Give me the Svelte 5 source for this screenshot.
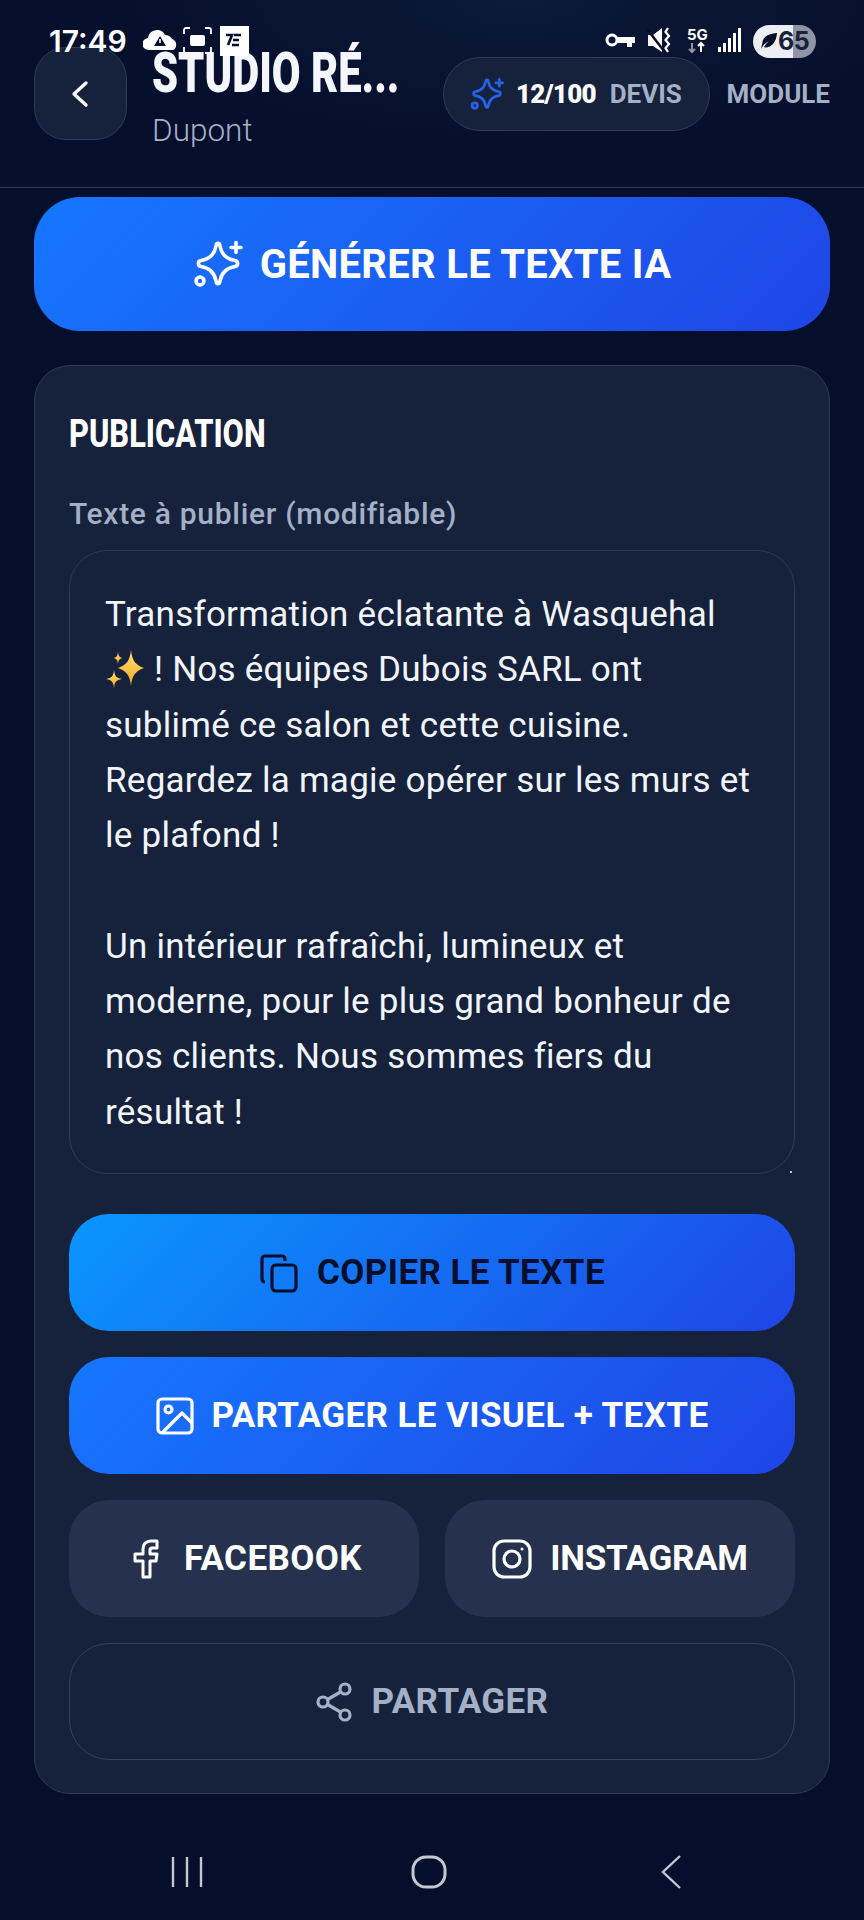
<script>
  const lines = [
    ['Transformation éclatante à Wasquehal'],
    ['✨', ' ! Nos équipes Dubois SARL ont'],
    ['sublimé ce salon et cette cuisine.'],
    ['Regardez la magie opérer sur les murs et'],
    ['le plafond !'],
    [''],
    ['Un intérieur rafraîchi, lumineux et'],
    ['moderne, pour le plus grand bonheur de'],
    ['nos clients. Nous sommes fiers du'],
    ['résultat !']
  ];
</script>

{#snippet sparkles(size, width)}
  <svg width={size} height={size} viewBox="0 0 50 50" fill="none" stroke="currentColor" stroke-width={width} stroke-linecap="round">
    <path d="M23 7C23.500 3.500 26.500 3.500 27 7C28.500 15.500 33 20 42 21.500C45.500 22 45.500 27 42 27.500C33 29 28.500 33.500 27 42C26.500 45.500 23.500 45.500 23 42C21.500 33.500 17 29 8 27.500C4.500 27 4.500 22 8 21.500C17 20 21.500 15.500 23 7Z"/>
    <path d="M43 3.500v10M38 8.500h10"/>
    <circle cx="7" cy="42" r="4"/>
  </svg>
{/snippet}

<div class="phone">
  <div class="status">
    <span class="time">17:49</span>
    <svg width="112" height="30" viewBox="0 0 112 30">
      <path d="M6 24a6 6 0 0 1-1-12 9 9 0 0 1 17-3 8 8 0 0 1 7 4 6 6 0 0 1 1 11z" fill="#fff"/>
      <path d="M17 10l6 10H11z" fill="#050e2b"/>
      <rect x="16.200" y="13" width="1.600" height="4" fill="#fff"/>
      <path d="M41 8V4a2 2 0 0 1 2-2h4M62 2h4a2 2 0 0 1 2 2v4M68 21v4a2 2 0 0 1-2 2h-4M47 27h-4a2 2 0 0 1-2-2v-4" fill="none" stroke="#fff" stroke-width="1.800"/>
      <rect x="47" y="9" width="15" height="11" rx="2" fill="#fff"/>
      <rect x="77" y="0" width="29" height="30" fill="#fff"/>
      <path d="M83 9h6l-4 10M91 9h7M90 14h6M89 19h7" fill="none" stroke="#050e2b" stroke-width="2.600"/>
    </svg>
    <span class="spacer"></span>
    <svg class="st-right" width="136" height="30" viewBox="0 0 136 30">
      <circle cx="7" cy="14" r="5" fill="none" stroke="#fff" stroke-width="3"/>
      <path d="M12 11h18v6h-3v4h-5v-4H12z" fill="#fff"/>
      <path d="M43 9h5l9-7v24l-9-6h-5z" fill="#fff"/>
      <path d="M42 3l17 22" stroke="#050e2b" stroke-width="2.500"/>
      <path d="M63 2l-2.500 4 3.500 4-3.500 4 3.500 4-3.500 4 2.500 4" fill="none" stroke="#fff" stroke-width="2.200"/>
      <text x="82" y="14" class="fiveg">5G</text>
      <path d="M87 17v9M84 23l3 3 3-3" fill="none" stroke="#8e95a6" stroke-width="2"/>
      <path d="M96 26v-9M93 20l3-3 3 3" fill="none" stroke="#fff" stroke-width="2"/>
      <rect x="113" y="21" width="3" height="5" fill="#fff"/>
      <rect x="118" y="17" width="3" height="9" fill="#fff"/>
      <rect x="123" y="12" width="3" height="14" fill="#fff"/>
      <rect x="128" y="7" width="3" height="19" fill="#fff"/>
      <rect x="133" y="2" width="3" height="24" fill="#fff"/>
    </svg>
    <div class="battery">
      <svg width="18" height="20" viewBox="0 0 20 20"><path d="M1 19C3 15 6 12 10 10 7 13 5 15 4.500 17 12 18 18 12 19 1 12 2 3 3 2.500 13z" fill="#050e2b"/></svg>
      <span>65</span>
    </div>
  </div>

  <header class="top">
    <button class="back" aria-label="Retour">
      <svg width="36" height="36" viewBox="0 0 36 36"><path d="M23 7L11 18l12 11" fill="none" stroke="#fff" stroke-width="3.400" stroke-linecap="round" stroke-linejoin="round"/></svg>
    </button>
    <div class="heading">
      <div class="title">STUDIO RÉ...</div>
      <div class="sub">Dupont</div>
    </div>
    <div class="pill">
      <span class="pill-icon">{@render sparkles(34, 4)}</span>
      <b>12/100</b>
      <span>DEVIS</span>
    </div>
    <span class="module">MODULE</span>
  </header>

  <main class="content">
    <button class="btn big grad">
      {@render sparkles(50, 3.6)}
      GÉNÉRER LE TEXTE IA
    </button>

    <section class="card">
      <h2>PUBLICATION</h2>
      <div class="label">Texte à publier (modifiable)</div>
      <div class="area">
        {#each lines as line}
          <div class="line">
            {#each line as part}
              {#if part === '✨'}
                <svg class="spark" width="40" height="40" viewBox="0 0 40 40">
                  <defs>
                    <linearGradient id="gold" x1="0" y1="0" x2="0" y2="1">
                      <stop offset="0" stop-color="#ffe27a"/>
                      <stop offset="1" stop-color="#f6a821"/>
                    </linearGradient>
                  </defs>
                  <path d="M26 1c1 10 4 15 13 18-9 3-12 8-13 18-1-10-4-15-13-18 9-3 12-8 13-18z" fill="url(#gold)"/>
                  <path d="M13 3c.500 4 1.500 5 4 6-2.500 1-3.500 2-4 6-.500-4-1.500-5-4-6 2.500-1 3.500-2 4-6z" fill="url(#gold)"/>
                  <path d="M9 21c.700 6 2 8 8 9-6 1-7.300 3-8 9-.700-6-2-8-8-9 6-1 7.300-3 8-9z" fill="url(#gold)"/>
                </svg>
              {:else}
                {part}
              {/if}
            {/each}
          </div>
        {/each}
        <span class="handle"></span>
      </div>

      <div class="actions">
        <button class="btn cyan">
          <svg width="40" height="40" viewBox="0 0 40 40" fill="none" stroke="#050e2b" stroke-width="3.200" stroke-linejoin="round">
            <rect x="13" y="12" width="24" height="26" rx="4"/>
            <path d="M6 29a3 3 0 0 1-3-3V6a3 3 0 0 1 3-3h17a3 3 0 0 1 3 3v2"/>
          </svg>
          COPIER LE TEXTE
        </button>
        <button class="btn grad">
          <svg width="38" height="38" viewBox="0 0 38 38" fill="none" stroke="#fff" stroke-width="3.200" stroke-linejoin="round">
            <rect x="2" y="2" width="34" height="34" rx="4"/>
            <circle cx="12.500" cy="12.500" r="3.500"/>
            <path d="M6 36L26 16l10 10"/>
          </svg>
          PARTAGER LE VISUEL + TEXTE
        </button>
        <div class="two">
          <button class="btn soft">
            <svg width="40" height="40" viewBox="-7 0 40 40" fill="none" stroke="#fff" stroke-width="3" stroke-linejoin="round">
              <path d="M24 2h-6c-5 0-8 3-8 8v5H2v7h8v16h7V22h6l1-7h-7v-4c0-1.500 1-2 2-2h5z"/>
            </svg>
            FACEBOOK
          </button>
          <button class="btn soft tight">
            <svg width="40" height="40" viewBox="0 0 40 40" fill="none" stroke="#fff" stroke-width="3.200">
              <rect x="2" y="2" width="36" height="36" rx="10"/>
              <circle cx="20" cy="20" r="8"/>
              <circle cx="30" cy="10" r="1.500" fill="#fff" stroke="none"/>
            </svg>
            INSTAGRAM
          </button>
        </div>
        <button class="btn outline">
          <svg width="38" height="40" viewBox="0 0 38 40" fill="none" stroke="#a3b0c6" stroke-width="3.200">
            <circle cx="29" cy="7" r="5"/>
            <circle cx="7" cy="20" r="5"/>
            <circle cx="29" cy="33" r="5"/>
            <path d="M11.500 17.500L24.500 10M11.500 22.500L24.500 30"/>
          </svg>
          PARTAGER
        </button>
      </div>
    </section>
  </main>

  <nav class="nav">
    <svg width="34" height="34" viewBox="0 0 34 34"><path d="M3 2v30M17 2v30M31 2v30" stroke="#c4c8d2" stroke-width="2.400"/></svg>
    <svg class="home" width="36" height="34" viewBox="0 0 36 34"><rect x="2" y="2" width="32" height="30" rx="13" fill="none" stroke="#c4c8d2" stroke-width="3"/></svg>
    <svg width="24" height="36" viewBox="0 0 24 36"><path d="M21 2L4 18l17 16" fill="none" stroke="#c4c8d2" stroke-width="2.400"/></svg>
  </nav>
</div>

<style>
  :global(body) {
    margin: 0;
    background: #050e2b;
  }

  .phone {
    position: relative;
    width: 864px;
    height: 1920px;
    overflow: hidden;
    background: radial-gradient(ellipse 480px 170px at 520px 0, #0c1938, transparent), #050e2b;
    color: #fff;
    font-family: Roboto, "Liberation Sans", sans-serif;
  }

  /* the system bar sits over the page header */
  .status {
    position: absolute;
    top: 0;
    left: 0;
    right: 0;
    display: flex;
    align-items: center;
    height: 30px;
    padding: 26px 48px 0 49px;
    z-index: 2;
  }

  .time {
    font: 600 30px Inter, sans-serif;
    margin-right: 16px;
  }

  .spacer {
    flex: 1;
  }

  .st-right {
    margin-right: 12px;
  }

  .fiveg {
    font: 700 15px Inter, sans-serif;
    fill: #fff;
  }

  .battery {
    display: flex;
    align-items: center;
    width: 63px;
    height: 33px;
    padding-left: 7px;
    box-sizing: border-box;
    border-radius: 17px;
    background: linear-gradient(90deg, #eceef2 64%, #8e95a6 64%);
    color: #1a2238;
    font: 700 25px Inter, sans-serif;
    letter-spacing: -0.5px;
  }

  .top {
    display: flex;
    align-items: center;
    height: 188px;
    padding: 0 34px;
    box-sizing: border-box;
    border-bottom: 1px solid #2e3a58;
  }

  .back {
    display: flex;
    align-items: center;
    justify-content: center;
    flex: none;
    width: 93px;
    height: 93px;
    padding: 0;
    border: 1px solid #2e3a58;
    border-radius: 32px;
    background: #16213c;
  }

  .heading {
    width: 316px;
    padding-left: 25px;
    box-sizing: border-box;
    margin-top: 8px;
  }

  .title {
    font-size: 56px;
    font-weight: 900;
    line-height: 56px;
    color: #f4f6fb;
    white-space: nowrap;
    transform: scaleX(0.745);
    transform-origin: left;
  }

  .sub {
    font-size: 31.5px;
    font-weight: 300;
    line-height: 40px;
    color: #a3b0c6;
    margin-top: 10px;
  }

  .pill {
    display: flex;
    align-items: center;
    width: 267px;
    height: 74px;
    padding-left: 26px;
    box-sizing: border-box;
    border: 1px solid #2e3a58;
    border-radius: 37px;
    background: #16213c;
    font-size: 26px;
    font-weight: 700;
  }

  .pill-icon {
    display: flex;
    margin-right: 12px;
  }

  .pill b {
    letter-spacing: -0.8px;
    margin-right: 14px;
  }

  .pill span {
    color: #a3b0c6;
  }

  .pill .pill-icon {
    color: #2563eb;
  }

  .module {
    margin-left: 17px;
    color: #a3b0c6;
    font-size: 26px;
    font-weight: 700;
  }

  .content {
    padding: 9px 34px 0;
  }

  .btn {
    display: flex;
    align-items: center;
    justify-content: center;
    gap: 18px;
    width: 100%;
    height: 117px;
    border: none;
    border-radius: 40px;
    color: #fff;
    font-family: Roboto, sans-serif;
    font-size: 35px;
    font-weight: 700;
    letter-spacing: 0.4px;
  }

  .grad {
    background: linear-gradient(135deg, #1677ff, #1f45e6);
  }

  .cyan {
    background: linear-gradient(135deg, #0a96ff, #1f45e6);
    color: #050e2b;
  }

  .soft {
    background: #25314d;
  }

  .tight {
    letter-spacing: -0.3px;
  }

  .outline {
    background: none;
    border: 1px solid #33405f;
    color: #a3b0c6;
  }

  .big {
    height: 134px;
    border-radius: 46px;
    font-size: 40px;
    letter-spacing: 0.3px;
    gap: 17px;
  }

  .card {
    margin-top: 34px;
    height: 1429px;
    padding: 46px 34px 0;
    box-sizing: border-box;
    border: 1px solid #2e3a58;
    border-radius: 36px;
    background: #16213c;
  }

  h2 {
    margin: 0;
    font-size: 39px;
    font-weight: 800;
    line-height: 44px;
    transform: scaleX(0.79);
    transform-origin: left;
  }

  .label {
    margin-top: 40px;
    color: #a3b0c6;
    font-size: 30px;
    font-weight: 500;
    letter-spacing: 0.7px;
    line-height: 36px;
  }

  .area {
    position: relative;
    height: 624px;
    margin-top: 18px;
    padding: 36px 35px;
    box-sizing: border-box;
    border: 1px solid #2e3a58;
    border-radius: 38px;
    color: #f1f5f9;
    font-size: 35px;
    letter-spacing: 0.25px;
    line-height: 55.3px;
  }

  .line {
    height: 55.3px;
    white-space: nowrap;
  }

  .spark {
    vertical-align: -8px;
  }

  .handle {
    position: absolute;
    right: 2px;
    bottom: 0;
    width: 2px;
    height: 2px;
    background: #c4c8d2;
  }

  .actions {
    display: flex;
    flex-direction: column;
    gap: 26px;
    margin-top: 40px;
  }

  .two {
    display: grid;
    grid-template-columns: 1fr 1fr;
    gap: 26px;
  }

  .nav {
    display: flex;
    justify-content: space-between;
    align-items: center;
    padding: 0 181px 0 170px;
    margin-top: 60px;
  }

  .home {
    margin-right: 5px;
  }
</style>
